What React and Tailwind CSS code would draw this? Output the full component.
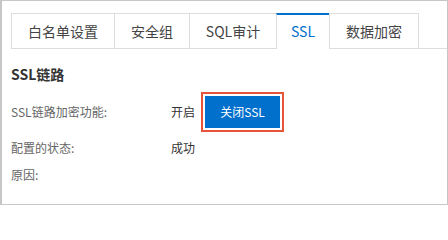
import React from 'react';

const tabs = [
  { name: '白名单设置', width: 'w-[103px]' },
  { name: '安全组', width: 'w-[75px]' },
  { name: 'SQL审计', width: 'w-[87px]' },
  { name: 'SSL', width: 'w-[53px]', active: true },
  { name: '数据加密', width: 'w-[90px]', last: true },
];

const Tabs = () => {
  return (
    <div className="flex items-start h-[36px] border-b border-[#dddddd]">
      {tabs.map((tab) =>
        tab.active ? (
          <div
            key={tab.name}
            className={`${tab.width} h-[36px] flex items-center justify-center bg-white border-l border-[#dddddd] border-t-2 border-t-[#0070cc] text-[14px] text-[#0070cc] pb-[1px]`}
          >
            {tab.name}
          </div>
        ) : (
          <div
            key={tab.name}
            className={`${tab.width} h-[35px] flex items-center justify-center border-t border-l border-[#dddddd] text-[14px] text-[#444444] ${tab.last ? 'border-r' : ''}`}
          >
            {tab.name}
          </div>
        )
      )}
    </div>
  );
};

const App = () => {
  return (
    <div className="w-[448px] h-[205px] bg-white border border-l-2 border-[#c6c6c6] pt-[12px] pl-[9px] font-['Noto_Sans_CJK_SC',sans-serif]">
      <Tabs />

      <div className="mt-[15px] leading-[20px] text-[14px] font-bold text-[#333333]">SSL链路</div>

      {/* 加密开关 */}
      <div className="mt-[8px] h-[40px] flex items-center text-[12px]">
        <div className="w-[160px] text-[#666666]">SSL链路加密功能:</div>
        <div className="text-[#333333]">开启</div>
        <div className="ml-[6px] border-2 border-[#e8543a] p-[2px]">
          <button className="w-[75px] h-[32px] bg-[#0070cc] text-white text-[12px] flex items-center justify-center">
            关闭SSL
          </button>
        </div>
      </div>

      <div className="mt-[6px] leading-[20px] flex text-[12px]">
        <div className="w-[160px] text-[#666666]">配置的状态:</div>
        <div className="text-[#333333]">成功</div>
      </div>

      <div className="mt-[7px] leading-[20px] flex text-[12px]">
        <div className="w-[160px] text-[#666666]">原因:</div>
      </div>
    </div>
  );
};

export default App;
